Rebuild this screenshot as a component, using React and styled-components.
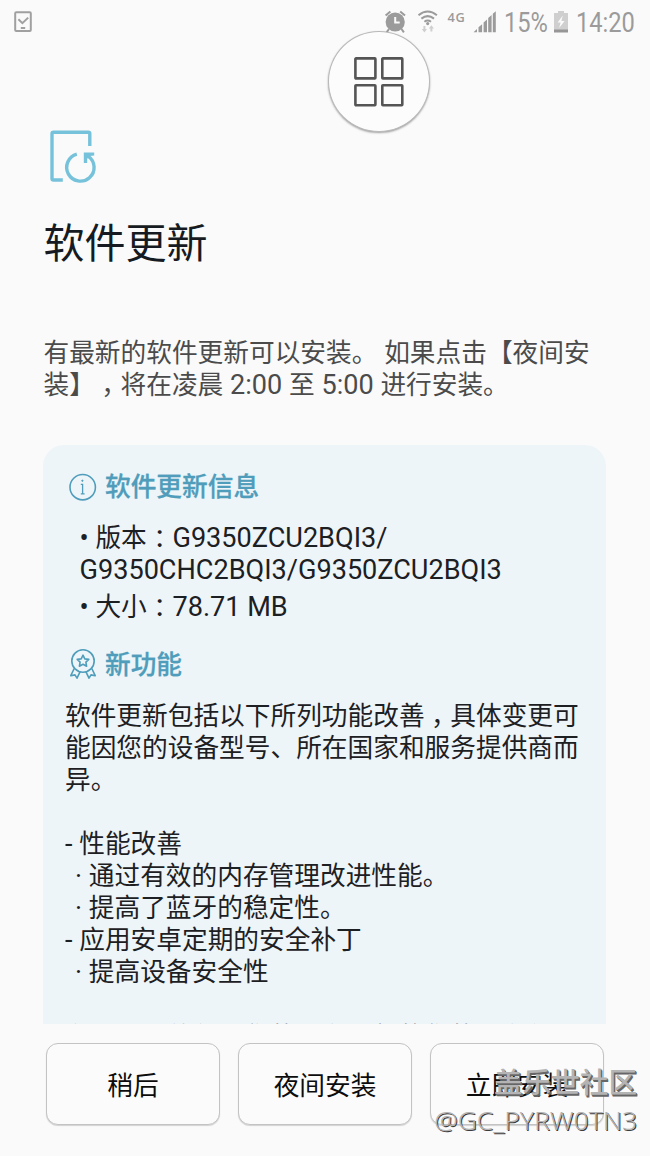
import React from 'react';
import styled, { createGlobalStyle } from 'styled-components';

const GlobalStyle = createGlobalStyle`
    * {
        box-sizing: border-box;
    }

    body {
        margin: 0;
        background: #fafafa;
        font-family: Roboto, "Noto Sans CJK SC", sans-serif;
        text-spacing-trim: space-all;
    }
`;

const Screen = styled.div`
    position: relative;
    display: flex;
    flex-direction: column;
    width: 650px;
    height: 1156px;
    overflow: hidden;
    background: #fafafa;
`;

const StatusBar = styled.header`
    display: flex;
    justify-content: space-between;
    flex: none;
    height: 44px;
    padding-left: 13px;
    color: #9b9b9b;
`;

const StatusIcons = styled.div`
    display: flex;
    width: 270px;
`;

const StatusText = styled.span`
    flex: none;
    width: ${(props) => props.$width}px;
    font-size: 27.5px;
    line-height: 46px;
    white-space: nowrap;
    transform: scaleX(0.86);
    transform-origin: left;
`;

const FloatingButton = styled.button`
    position: absolute;
    top: 31px;
    left: 328px;
    display: flex;
    align-items: center;
    justify-content: center;
    width: 102px;
    height: 101px;
    padding: 0;
    border: 1px solid #b9b9b9;
    border-radius: 50%;
    background: #fcfcfc;
    box-shadow: 0 1px 2px rgba(0, 0, 0, 0.35);
`;

const Intro = styled.section`
    flex: none;
    height: 401px;
    padding: 84px 40px 0 43.5px;
`;

const Title = styled.h1`
    margin: 32px 0 0;
    font-size: 41px;
    font-weight: 400;
    line-height: 56px;
    color: #161b22;
`;

const Description = styled.div`
    margin-top: 65px;
    font-size: 25.7px;
    color: #4b4b4b;
    white-space: nowrap;
`;

const InfoCard = styled.section`
    flex: none;
    width: 563px;
    height: 579px;
    margin-left: 43px;
    padding: 26px 22px 0;
    overflow: hidden;
    border-radius: 21px 21px 0 0;
    background: #edf5f9;
    color: #1d2023;
    font-size: 25.7px;
    white-space: nowrap;
`;

const CardHeading = styled.h2`
    display: flex;
    align-items: center;
    gap: 8px;
    height: 32px;
    margin: ${(props) => props.$top || 0}px 0 0 3px;
    font-size: 25.7px;
    font-weight: 500;
    line-height: 34px;
    color: #4f9dbb;
    -webkit-text-stroke: 0.3px #4f9dbb;
`;

const InfoList = styled.ul`
    display: flex;
    flex-direction: column;
    gap: 5px;
    margin: 19px 0 0 14.5px;
    padding: 0;
    list-style: none;
`;

const Features = styled.div`
    margin-top: 19px;
`;

const Line = styled.div`
    height: ${(props) => props.$height || 32}px;
    padding-left: ${(props) => props.$indent || 0}px;
    line-height: 32px;
`;

const Latin = styled.span`
    font-size: 27.1px;
`;

// half-width punctuation centred in a full-width cell
const Sign = styled.span`
    padding: 0 0.25em;
    font-feature-settings: "halt";
`;

const Actions = styled.footer`
    display: flex;
    gap: 18px;
    margin: 19px 0 0 46px;
`;

const ActionButton = styled.button`
    width: 174px;
    height: 82px;
    padding: 0 0 1px;
    border: 1px solid #c3c3c3;
    border-radius: 12px;
    background: #fbfbfb;
    box-shadow: 0 1px 1px rgba(0, 0, 0, 0.16);
    font-family: inherit;
    font-size: 25.7px;
    color: #0c0c0c;
`;

const Watermark = styled.div`
    position: absolute;
    right: 13px;
    top: 1065px;
    display: flex;
    flex-direction: column;
    align-items: flex-end;
    line-height: 37px;
    white-space: nowrap;
`;

const Community = styled.span`
    font-size: 28.6px;
    font-weight: 500;
    color: #b4b4b4;
    text-shadow: 1px 1px 0 #666, 1.5px 1.5px 0 #666;
`;

const UserName = styled.span`
    font-family: "Noto Sans", sans-serif;
    font-size: 26.4px;
    font-weight: 300;
    color: #b4b4b4;
    text-shadow: 1px 1px 0 #3c3c3c;
`;

const DeviceCheckIcon = () => (
    <svg width="20" height="44" viewBox="0 0 20 44" fill="none" stroke="#a0a0a0" strokeWidth="2">
        <rect x="2.2" y="12.2" width="15.6" height="18.8" rx="1" />
        <path d="M5.4 19.2l4 4 5.8-5.6M7.8 28h4.4" />
    </svg>
);

const SignalIcons = () => (
    <svg width="124" height="44" viewBox="380 0 124 44">
        <circle cx="395.2" cy="22" r="9.6" fill="#9b9b9b" />
        <path d="M385.6 15.6l4.8-4M405 15.6l-4.8-4M389 29l-2.4 3.4M401.5 29l2.4 3.4" stroke="#9b9b9b" strokeWidth="2" />
        <path d="M395.2 17v5.5h4.5" fill="none" stroke="#fafafa" strokeWidth="2" />
        <g fill="none" stroke="#9b9b9b" strokeWidth="2">
            <path d="M418.5 15.2q9.2-7.4 18.4 0" />
            <path d="M421.4 18.6q6.3-5 12.6 0" />
            <path d="M424.4 21.8q3.3-2.5 6.6 0" />
        </g>
        <circle cx="427.7" cy="23.6" r="1.6" fill="#9b9b9b" />
        <path d="M423.4 26h2v3h1.6l-2.6 3.4-2.6-3.4h1.6zM430.4 31.6h2v-3h1.6l-2.6-3.4-2.6 3.4h1.6z" fill="#cfcfcf" />
        <text x="447.5" y="22" fontFamily="Open Sans, sans-serif" fontSize="12.8" fontWeight="600" letterSpacing="0.8" fill="#9b9b9b">4G</text>
        <path d="M473.5 32.2l3.5-3.2v3.2zM478.5 27.2l3.6-3v8h-3.6zM483.6 22.4l3.4-3v12.8h-3.4zM488.2 18l3.4-3v17.2h-3.4zM492.8 13.8l3-2.6v21h-3z" fill="#9b9b9b" />
    </svg>
);

const BatteryIcon = () => (
    <svg width="25" height="44" viewBox="551 0 25 44">
        <path d="M558 11h6v2h4v19h-14V13h4z" fill="#cfcfcf" />
        <path d="M554 29.5h14v3h-14z" fill="#969696" />
        <path d="M562.8 15.5l-5.2 7h3l-1.5 5.5 5.5-7h-3.2z" fill="#fafafa" />
    </svg>
);

const AppsIcon = () => (
    <svg width="50" height="50" viewBox="0 0 50 50" fill="none" stroke="#555" strokeWidth="2.6">
        <rect x="1.4" y="1.4" width="20" height="20" rx="0.6" />
        <rect x="28.3" y="1.4" width="20" height="20" rx="0.6" />
        <rect x="1.4" y="28.2" width="20" height="20" rx="0.6" />
        <rect x="28.3" y="28.2" width="20" height="20" rx="0.6" />
    </svg>
);

const UpdateSvg = styled.svg`
    display: block;
`;

const UpdateIcon = () => (
    <UpdateSvg width="54" height="56" viewBox="43.5 128 54 56" fill="none" stroke="#76c2da" strokeWidth="3.4">
        <path d="M89.3 146v-12.3q0-1.5-1.5-1.5H53q-1.5 0-1.5 1.5v44.8q0 1.5 1.5 1.5h9.3" />
        <path d="M76.3 154.2a13.7 13.7 0 1 0 11.6 2.1" />
        <path d="M83.3 152.4h10.4v3l-4.2.5-2.8 2.8v4.3h-3.4z" fill="#76c2da" stroke="none" />
    </UpdateSvg>
);

const InfoIcon = () => (
    <svg width="29" height="29" viewBox="0 0 29 29" fill="none" stroke="#4f9dbb" strokeWidth="1.6">
        <circle cx="14.7" cy="14.2" r="12.7" />
        <path d="M12.8 11.4h1.8v9.4M12.8 20.9h3.8" strokeWidth="1.3" />
        <circle cx="14.4" cy="7.7" r="0.7" fill="#4f9dbb" strokeWidth="0.8" />
    </svg>
);

const BadgeIcon = () => (
    <svg width="29" height="32" viewBox="0 1 29 32" fill="none" stroke="#4f9dbb" strokeWidth="1.6" strokeLinejoin="round">
        <circle cx="15" cy="13" r="11.2" />
        <path d="M15 7.2l1.8 3.7 4 .5-2.9 2.8.7 4-3.6-1.9-3.6 1.9.7-4-2.9-2.8 4-.5z" />
        <path d="M6.2 20.5l-3.4 7.2 4.2-.8 2 3.3 3.3-6.8M23.8 20.5l3.4 7.2-4.2-.8-2 3.3-3.3-6.8" />
    </svg>
);

const App = () => {
    return (
        <Screen>
            <GlobalStyle />
            <StatusBar>
                <DeviceCheckIcon />
                <StatusIcons>
                    <SignalIcons />
                    <StatusText $width={47}>15%</StatusText>
                    <BatteryIcon />
                    <StatusText $width={70}>14:20</StatusText>
                </StatusIcons>
            </StatusBar>

            <Intro>
                <UpdateIcon />
                <Title>软件更新</Title>
                <Description>
                    <Line>有最新的软件更新可以安装。<Latin> </Latin>如果点击【夜间安</Line>
                    <Line>
                        装】<Sign>，</Sign>将在凌晨<Latin> 2:00 </Latin>至<Latin> 5:00 </Latin>进行安装。
                    </Line>
                </Description>
            </Intro>

            <InfoCard>
                <CardHeading>
                    <InfoIcon />
                    软件更新信息
                </CardHeading>
                <InfoList>
                    <li>
                        <Line><Latin>• </Latin>版本<Sign>：</Sign><Latin>G9350ZCU2BQI3/</Latin></Line>
                        <Line><Latin>G9350CHC2BQI3/G9350ZCU2BQI3</Latin></Line>
                    </li>
                    <li>
                        <Line><Latin>• </Latin>大小<Sign>：</Sign><Latin>78.71 MB</Latin></Line>
                    </li>
                </InfoList>
                <CardHeading $top={26}>
                    <BadgeIcon />
                    新功能
                </CardHeading>
                <Features>
                    <Line>软件更新包括以下所列功能改善<Sign>，</Sign>具体变更可</Line>
                    <Line>能因您的设备型号、所在国家和服务提供商而</Line>
                    <Line>异。</Line>
                    <Line />
                    <Line><Latin>- </Latin>性能改善</Line>
                    <Line $indent={10}><Latin>· </Latin>通过有效的内存管理改进性能。</Line>
                    <Line $indent={10}><Latin>· </Latin>提高了蓝牙的稳定性。</Line>
                    <Line><Latin>- </Latin>应用安卓定期的安全补丁</Line>
                    <Line $indent={10}><Latin>· </Latin>提高设备安全性</Line>
                    <Line $height={33} />
                    <Line>在更可以软件更您的更在更新的您的更在使用</Line>
                </Features>
            </InfoCard>

            <Actions>
                <ActionButton>稍后</ActionButton>
                <ActionButton>夜间安装</ActionButton>
                <ActionButton>立即安装</ActionButton>
            </Actions>

            <Watermark>
                <Community>盖乐世社区</Community>
                <UserName>@GC_PYRW0TN3</UserName>
            </Watermark>

            <FloatingButton>
                <AppsIcon />
            </FloatingButton>
        </Screen>
    );
};

export default App;
